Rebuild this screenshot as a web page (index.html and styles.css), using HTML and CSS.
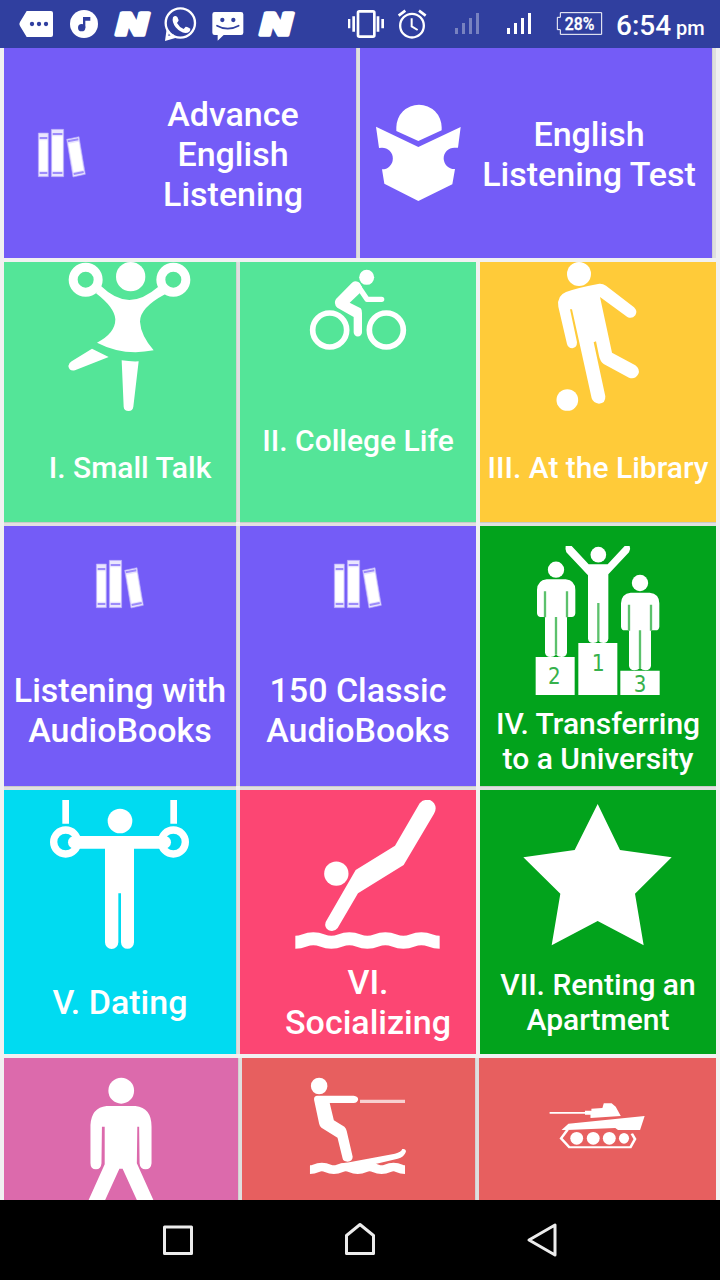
FILE: index.html
```
<!DOCTYPE html>
<html lang="en">
<head>
    <meta charset="UTF-8">
    <meta name="viewport" content="width=device-width, initial-scale=1.0">
    <title>English Listening</title>
    <link rel="stylesheet" href="styles.css">
</head>
<body>
    <svg class="defs" width="0" height="0">
        <defs>
            <g id="books">
                <path class="cover" d="M115 129H145V260H115ZM154 118H191V260H154ZM200 148L237 140L256 253L219 261Z"/>
                <path d="M118 151H142V242H118ZM157 139H188V242H157ZM206 161L236 155L250 240L221 246Z"/>
                <path class="band" d="M119 144H142M119 249H142M158 132H187M158 249H187M203 154L235 148M221 252L251 246"/>
            </g>
            <g id="standing">
                <circle cx="240" cy="149" r="24.500"/>
                <path d="M212 178H269Q298 181 298 210V280Q297 291 287 291H273V398Q270 411 257 411Q247 411 240 404Q233 411 223 411Q210 411 207 398V291H194Q184 291 183 280V210Q184 181 212 178Z"/>
                <path class="cut" d="M207 214V292M273 214V292M240 291V404"/>
            </g>
        </defs>
    </svg>

    <header class="status-bar">
        <div class="status-left">
            <svg viewBox="36 0 144 144" width="48" height="48">
                <path d="M80 33H153Q159 33 159 39V105Q159 111 153 111H80L60 78Q56 72 60 66Z"/>
                <g class="ink"><circle cx="96" cy="72" r="6.500"/><circle cx="117" cy="72" r="6.500"/><circle cx="138" cy="72" r="6.500"/></g>
            </svg>
            <svg viewBox="180 0 144 144" width="48" height="48">
                <circle cx="252" cy="72" r="42"/>
                <g class="ink"><circle cx="245" cy="83" r="11"/><path d="M249 51H271V62H256V83H249Z"/></g>
            </svg>
            <svg viewBox="324 0 144 144" width="48" height="48">
                <text class="logo-n" x="350" y="106" textLength="92" lengthAdjust="spacingAndGlyphs">N</text>
            </svg>
            <svg viewBox="468 0 144 144" width="48" height="48">
                <circle class="line" cx="541" cy="69" r="44" stroke-width="7"/>
                <path d="M500 86L495 123L526 114L520 103L505 108L508 93Z"/>
                <path d="M519 52Q525 45 532 51L536 61Q535 65 531 69Q538 82 551 87L557 80Q561 79 571 86Q572 98 556 99Q541 98 527 82Q515 66 519 52Z"/>
            </svg>
            <svg viewBox="612 0 144 144" width="48" height="48">
                <path d="M644 36H723Q730 36 730 43V98Q730 105 723 105H671L653 122V105H644Q637 105 637 98V43Q637 36 644 36Z"/>
                <g class="ink"><circle cx="667" cy="60" r="6.500"/><circle cx="700" cy="60" r="6.500"/></g>
                <path class="smile" d="M651 77Q683 95 716 77"/>
            </svg>
            <svg viewBox="756 0 144 144" width="48" height="48">
                <text class="logo-n" x="782" y="106" textLength="92" lengthAdjust="spacingAndGlyphs">N</text>
            </svg>
        </div>
        <div class="status-right">
            <svg viewBox="9 0 138 144" width="46" height="48">
                <rect class="line" x="54" y="34" width="49" height="76" rx="4" stroke-width="8"/>
                <path d="M24 57H31V85H24ZM37 49H45V95H37ZM110 49H118V95H110ZM124 57H132V85H124Z"/>
            </svg>
            <svg viewBox="147 0 138 144" width="46" height="48">
                <circle class="line" cx="216" cy="77" r="35.500" stroke-width="7"/>
                <path class="line" d="M176 47L196 32M237 32L257 47" stroke-width="8"/>
                <path class="line" d="M215 55V79L233 90" stroke-width="6"/>
            </svg>
            <svg class="faded" viewBox="285 0 174 144" width="58" height="48">
                <path d="M345 84H354V102H345ZM366 69H375V102H366ZM387 54H396V102H387ZM408 39H417V102H408Z"/>
            </svg>
            <svg viewBox="459 0 156 144" width="52" height="48">
                <path d="M501 84H510V102H501ZM522 69H531V102H522ZM543 54H552V102H543ZM564 39H573V102H564Z"/>
            </svg>
            <svg viewBox="615 0 201 144" width="67" height="48">
                <path class="line" d="M661 38H785V103H661V89H652V52H661Z" stroke-width="3"/>
                <text class="battery-text" x="674" y="91" textLength="89" lengthAdjust="spacingAndGlyphs">28%</text>
            </svg>
            <div class="clock">6:54 <span class="ampm">pm</span></div>
        </div>
    </header>

    <main class="board">
        <div class="row row-two">
            <div class="tile purple side shade-right">
                <svg viewBox="12 -126 318 630" width="106" height="210"><use href="#books"/></svg>
                <div class="label big">Advance<br>English<br>Listening</div>
            </div>
            <div class="tile purple side shade-right">
                <svg viewBox="30 -126 318 630" width="106" height="210">
                    <path d="M139 123V112A68 68 0 0 1 275 112V121L205 153Z"/>
                    <path d="M78 110L205 171L332 111L324 173H313A32 32 0 0 0 313 237H315L307 283L205 333L103 281L96 238A32.500 32.500 0 0 0 96 173L87 174Z"/>
                </svg>
                <div class="label big">English<br>Listening Test</div>
            </div>
        </div>

        <div class="row row-top">
            <div class="tile green shade-right shade-bottom">
                <svg viewBox="12 21 696 450" width="232" height="150">
                    <circle class="line" cx="257" cy="74" r="37.500" stroke-width="27"/>
                    <circle class="line" cx="520" cy="74" r="37.500" stroke-width="27"/>
                    <circle cx="392" cy="65" r="44"/>
                    <path d="M303 93Q345 134 388 135Q430 134 475 95L495 118Q420 158 420 200Q422 240 461 286Q370 304 291 263Q346 235 346 193Q344 158 288 115Z"/>
                    <path d="M276 281L326 306L225 346Q208 350 205 333Q206 324 215 319Z"/>
                    <path d="M365 316Q390 320 416 319L400 455Q398 468 386 468Q372 468 371 455Z"/>
                </svg>
                <div class="label drop-38 indent">I. Small Talk</div>
            </div>
            <div class="tile green shade-bottom">
                <svg viewBox="12 21 708 450" width="236" height="150">
                    <circle class="line" cx="281" cy="225" r="51" stroke-width="17"/>
                    <circle class="line" cx="451" cy="225" r="51" stroke-width="17"/>
                    <circle cx="392" cy="67" r="22.500"/>
                    <path d="M348 83Q360 74 371 84L378 96L371 115L341 143L374 160Q379 165 378 175V232A12.500 12.500 0 0 1 353 232V186L304 158Q291 146 300 132Z"/>
                    <path class="limb" d="M364 90L393 133H437" stroke-width="16"/>
                </svg>
                <div class="label drop-11">II. College Life</div>
            </div>
            <div class="tile yellow shade-bottom">
                <svg viewBox="12 21 708 450" width="236" height="150">
                    <circle cx="309" cy="57" r="36"/>
                    <circle cx="274" cy="435" r="32.500"/>
                    <path d="M270 111Q300 99 370 86Q380 85 390 92L474 157Q486 168 478 181Q468 193 454 186L372 126L408 293L478 331Q493 342 487 357Q478 374 459 368L383 327Q372 318 369 302L360 259L353 262L388 424Q389 446 369 446Q352 445 347 430L288 163L282 163L303 262Q303 278 289 280Q276 279 273 267L247 155Q242 122 270 111Z"/>
                </svg>
                <div class="label drop-38">III. At the Library</div>
            </div>
        </div>

        <div class="row row-top">
            <div class="tile purple shade-right shade-bottom">
                <svg viewBox="12 18 696 300" width="232" height="100"><use href="#books" x="174" y="3"/></svg>
                <div class="label big drop-44">Listening with<br>AudioBooks</div>
            </div>
            <div class="tile purple shade-bottom">
                <svg viewBox="720 18 708 300" width="236" height="100"><use href="#books" x="888" y="3"/></svg>
                <div class="label big drop-44">150 Classic<br>AudioBooks</div>
            </div>
            <div class="tile dark-green shade-bottom">
                <svg viewBox="12 18 708 510" width="236" height="170">
                    <path d="M179 411H296V525H179ZM307 369H424V525H307ZM433 452H551V525H433Z"/>
                    <use href="#standing"/>
                    <use href="#standing" x="252" y="40"/>
                    <circle cx="367" cy="104" r="23.500"/>
                    <path d="M269 78H287L338 133H395L446 78H461Q465 88 459 97L397 163V356Q395 369 382 369Q373 369 367 362Q361 369 351 369Q338 369 336 356V166L271 97Q267 88 269 78Z"/>
                    <path class="cut" d="M367 249V363"/>
                    <g class="place">
                        <text x="216" y="492" textLength="38" lengthAdjust="spacingAndGlyphs">2</text>
                        <text x="347" y="453" textLength="39" lengthAdjust="spacingAndGlyphs">1</text>
                        <text x="473" y="515" textLength="38" lengthAdjust="spacingAndGlyphs">3</text>
                    </g>
                </svg>
                <div class="label drop-10">IV. Transferring<br>to a University</div>
            </div>
        </div>

        <div class="row row-mid">
            <div class="tile cyan shade-right">
                <svg viewBox="12 15 696 480" width="232" height="160">
                    <path d="M187 45H207V116H187ZM511 45H531V116H511Z"/>
                    <circle class="line" cx="197" cy="171" r="36" stroke-width="22"/>
                    <circle class="line" cx="520" cy="171" r="36" stroke-width="22"/>
                    <path class="limb" d="M223 172H494" stroke-width="38"/>
                    <circle cx="360" cy="108" r="37"/>
                    <path d="M315 172H402V472A19.500 19.500 0 0 1 363 472V325H355V472A19.500 19.500 0 0 1 315 472Z"/>
                </svg>
                <div class="label big drop-32">V. Dating</div>
            </div>
            <div class="tile pink">
                <svg viewBox="-135 15 708 480" width="236" height="160">
                    <circle cx="154" cy="266" r="36.500"/>
                    <path d="M122 411L212 255L330 182L404 55Q413 45 421 45H435Q451 52 452 70Q452 78 447 86L356 240L219 325L158 429Q147 443 131 436Q117 427 122 411Z"/>
                    <path class="line" d="M31 472C58 472 58 461 85 461S112 472 139 472S166 461 193 461S220 472 247 472S274 461 301 461S328 472 355 472S382 461 409 461S437 472 464 472" stroke-width="39"/>
                </svg>
                <div class="label big drop-12 indent">VI.<br>Socializing</div>
            </div>
            <div class="tile dark-green">
                <svg viewBox="585 15 708 480" width="236" height="160">
                    <path d="M938 57L1005 195L1160 217L1050 326L1076 481L938 408L800 481L826 326L715 217L869 195Z"/>
                </svg>
                <div class="label drop-17">VII. Renting an<br>Apartment</div>
            </div>
        </div>

        <div class="row row-last">
            <div class="tile orchid shade-right">
                <svg viewBox="8.700 39 509.600 426" width="234" height="142" preserveAspectRatio="none">
                    <ellipse cx="264" cy="137" rx="28" ry="39"/>
                    <path d="M232 183H295Q330 188 330 245V355Q329 373 317 373Q305 373 304 355L303 245H299L298 355L334 465H298L267 371H260L229 465H193L228 358V245H222L221 355Q220 373 209 373Q197 373 197 355V240Q199 188 232 183Z"/>
                </svg>
            </div>
            <div class="tile coral shade-right">
                <svg viewBox="527 39 507.400 426" width="233" height="142" preserveAspectRatio="none">
                    <ellipse cx="695" cy="123" rx="18" ry="25"/>
                    <path d="M690 152H770Q780 154 780 163Q779 174 770 174H718L727 226L750 245Q754 250 755 258L768 335Q768 348 757 350Q747 350 746 340L735 278L700 248Q696 243 695 236L684 165Q683 153 690 152Z"/>
                    <path class="rope" d="M784 169H882"/>
                    <path d="M740 357L860 326Q874 322 876 312Q884 310 884 320Q880 336 866 341L790 366Z"/>
                    <path class="line" d="M675 374C688 374 688 366 701 366S714 374 727 374S740 366 753 366S766 374 779 374S792 366 805 366S818 374 831 374S844 366 857 366S869 374 882 374" stroke-width="26"/>
                </svg>
            </div>
            <div class="tile coral">
                <svg viewBox="1043.200 39 516.200 426" width="237" height="142" preserveAspectRatio="none">
                    <path d="M1197 201H1274V197H1288V191L1312 189L1315 175H1332L1341 185L1352 213L1286 219V209H1274V206H1197Z"/>
                    <path d="M1223 255L1238 236L1404 213L1394 255H1346L1340 249L1235 255Z"/>
                    <path class="line" d="M1236 254L1222 280L1240 307H1373L1383 282L1376 266" stroke-width="6"/>
                    <ellipse cx="1256" cy="280" rx="14" ry="19"/>
                    <ellipse cx="1292" cy="280" rx="14" ry="19"/>
                    <ellipse cx="1327" cy="280" rx="14" ry="19"/>
                    <ellipse cx="1359" cy="280" rx="11" ry="16"/>
                </svg>
            </div>
        </div>
    </main>

    <nav class="nav-bar">
        <svg viewBox="0 0 40 40" width="40" height="40"><path d="M6.500 7H33.500V33.500H6.500Z"/></svg>
        <svg viewBox="0 0 40 40" width="40" height="40"><path d="M6.500 33.500V15.500L20 4.500L33.500 15.500V33.500Z"/></svg>
        <svg viewBox="0 0 40 40" width="40" height="40"><path d="M33 5V35L7 20Z"/></svg>
    </nav>
</body>
</html>
```

FILE: styles.css
```
body {
    margin: 0;
    width: 720px;
    height: 1280px;
    overflow: hidden;
    background-color: #f1f1f1;
    font-family: Roboto, "Liberation Sans", sans-serif;
    color: #fff;
}
svg {
    display: block;
    flex: none;
    fill: #fff;
}
.defs {
    height: 0;
}
.line, .limb {
    fill: none;
    stroke: #fff;
}
.limb {
    stroke-linecap: round;
    stroke-linejoin: round;
}

/* status bar */
.status-bar {
    display: flex;
    justify-content: space-between;
    height: 48px;
    padding-left: 12px;
    background-color: #303f9f;
}
.status-left, .status-right {
    display: flex;
}
.status-right {
    width: 377px;
}
.ink {
    fill: #303f9f;
}
.smile {
    fill: none;
    stroke: #303f9f;
    stroke-width: 5;
    stroke-linecap: round;
}
.logo-n {
    font-size: 96px;
    font-weight: 900;
    font-style: italic;
    stroke: #fff;
    stroke-width: 11;
    stroke-linejoin: round;
}
.faded {
    opacity: 0.35;
}
.battery-text {
    font-size: 53px;
    font-weight: 500;
    stroke: #fff;
    stroke-width: 1;
}
.clock {
    padding-left: 4px;
    font-size: 28px;
    font-weight: 500;
    line-height: 51px;
    white-space: nowrap;
}
.ampm {
    margin-left: -2px;
    font-size: 20px;
}

/* tiles */
.board {
    display: flex;
    flex-direction: column;
    gap: 4px;
    height: 1152px;
    overflow: hidden;
}
.row {
    display: grid;
    flex: none;
    gap: 4px;
    padding: 0 4px;
}
.row-two {
    grid-template-columns: 352px 352px;
    height: 210px;
}
.row-top {
    grid-template-columns: 232px 236px 236px;
    height: 260px;
}
.row-mid {
    grid-template-columns: 232px 236px 236px;
    height: 264px;
}
.row-last {
    grid-template-columns: 234px 233px 237px;
    height: 142px;
}
.tile {
    display: flex;
    flex-direction: column;
}
.side {
    flex-direction: row;
    align-items: center;
}
.shade-right {
    box-shadow: 1px 0 0 #d2d2d2, 4px 0 0 #dfdfdf;
}
.shade-bottom {
    box-shadow: 0 1px 0 #cacaca, 0 4px 0 #e0e0e0;
}
.shade-right.shade-bottom {
    box-shadow: 0 1px 0 #cacaca, 0 4px 0 #e0e0e0, 1px 0 0 #d2d2d2, 4px 0 0 #dfdfdf;
}
.label {
    font-size: 30px;
    font-weight: 500;
    line-height: 35px;
    text-align: center;
    white-space: nowrap;
}
.side .label {
    flex: 1;
    padding-top: 2px;
}
.big {
    font-size: 34px;
    line-height: 40px;
}
.indent {
    padding-left: 20px;
}
.drop-10 {
    margin-top: 10px;
}
.drop-11 {
    margin-top: 11px;
}
.drop-12 {
    margin-top: 12px;
}
.drop-17 {
    margin-top: 17px;
}
.drop-32 {
    margin-top: 32px;
}
.drop-38 {
    margin-top: 38px;
}
.drop-44 {
    margin-top: 44px;
}
.purple {
    background-color: #745cf7;
}
.green {
    background-color: #54e598;
}
.yellow {
    background-color: #ffcb39;
}
.dark-green {
    background-color: #02a31c;
}
.cyan {
    background-color: #00dbf1;
}
.pink {
    background-color: #fc4673;
}
.orchid {
    background-color: #dc6aac;
}
.coral {
    background-color: #e75f5f;
}

/* icon details */
.cover {
    fill: #e9e5fe;
    stroke: #b3a6fb;
    stroke-width: 2;
}
.band {
    fill: none;
    stroke: #9c8bfa;
    stroke-width: 6;
}
.cut {
    fill: none;
    stroke: #5cc16c;
    stroke-width: 7;
}
.place text {
    fill: #37b14c;
    font-family: "DejaVu Sans", sans-serif;
    font-size: 68px;
}
.rope {
    stroke: #f7cfcf;
    stroke-width: 10;
}

/* bottom navigation */
.nav-bar {
    display: flex;
    justify-content: center;
    align-items: center;
    gap: 142px;
    height: 80px;
    background-color: #000;
}
.nav-bar svg {
    fill: none;
    stroke: #ececec;
    stroke-width: 3;
    stroke-linejoin: round;
}
```
